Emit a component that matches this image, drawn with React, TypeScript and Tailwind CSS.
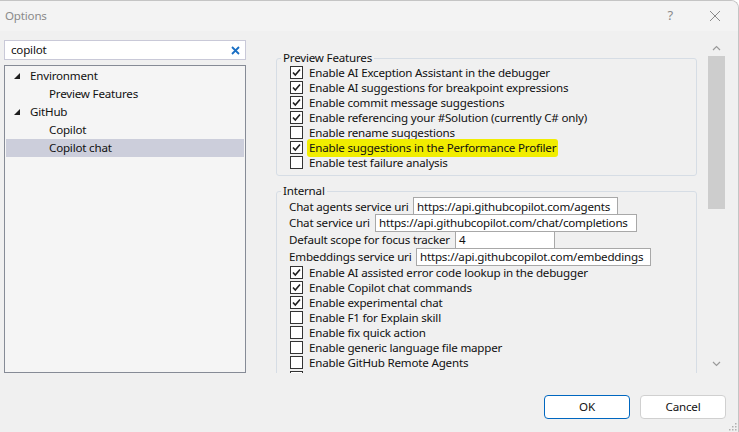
import { Fragment } from 'react'

const preview = [
  { label: 'Enable AI Exception Assistant in the debugger', checked: true },
  { label: 'Enable AI suggestions for breakpoint expressions', checked: true },
  { label: 'Enable commit message suggestions', checked: true },
  { label: 'Enable referencing your #Solution (currently C# only)', checked: true },
  { label: 'Enable rename suggestions', checked: false },
  { label: 'Enable suggestions in the Performance Profiler', checked: true, marked: true },
  { label: 'Enable test failure analysis', checked: false },
]

const uris = [
  { label: 'Chat agents service uri', value: 'https://api.githubcopilot.com/agents', lw: 'w-[124px]', bw: 'w-[205px]' },
  { label: 'Chat service uri', value: 'https://api.githubcopilot.com/chat/completions', lw: 'w-[86px]', bw: 'w-[262px]' },
  { label: 'Default scope for focus tracker', value: '4', lw: 'w-[166px]', bw: 'w-[100px]' },
  { label: 'Embeddings service uri', value: 'https://api.githubcopilot.com/embeddings', lw: 'w-[127px]', bw: 'w-[235px]' },
]

const internal = [
  { label: 'Enable AI assisted error code lookup in the debugger', checked: true },
  { label: 'Enable Copilot chat commands', checked: true },
  { label: 'Enable experimental chat', checked: true },
  { label: 'Enable F1 for Explain skill', checked: false },
  { label: 'Enable fix quick action', checked: false },
  { label: 'Enable generic language file mapper', checked: false },
  { label: 'Enable GitHub Remote Agents', checked: false },
]

const tree = [
  { label: 'Environment', depth: 0, open: true },
  { label: 'Preview Features', depth: 1 },
  { label: 'GitHub', depth: 0, open: true },
  { label: 'Copilot', depth: 1 },
  { label: 'Copilot chat', depth: 1, selected: true },
]

function Box({ checked }: { checked: boolean }) {
  return (
    <span className="w-[13px] h-[13px] shrink-0 border border-[#333333] bg-white flex items-center justify-center">
      {checked && (
        <svg width="11" height="11" viewBox="0 0 11 11">
          <path d="M2 5.5 L4.3 8 L9 2.5" fill="none" stroke="#1e1e1e" strokeWidth="1.6" />
        </svg>
      )}
    </span>
  )
}

function CheckRow({ label, checked, marked }: { label: string; checked: boolean; marked?: boolean }) {
  return (
    <div className="h-[15px] flex items-center gap-[6px] whitespace-nowrap">
      <Box checked={checked} />
      <span className={marked ? 'bg-[#f1ed00] rounded-[3px] px-[2px] -mx-[2px] py-[1.5px] leading-[15px]' : 'leading-[15px]'}>
        {label}
      </span>
    </div>
  )
}

export default function App() {
  return (
    <div
      className="w-[739px] h-[432px] bg-[#f0f0f0] flex flex-col overflow-hidden border-t border-r border-[#c4c4c4] rounded-tr-[8px] text-[11.6px] tracking-[-0.2px] text-[#111]"
      style={{ fontFamily: '"Noto Sans", "Open Sans", sans-serif' }}
    >
      <div className="h-[30px] shrink-0 bg-[#f3f3f3] flex items-center pl-[5px]">
        <span className="text-[#8a8a8a]">Options</span>
        <span className="ml-auto text-[#8a8a8a] text-[13px] mr-[36px]">?</span>
        <svg width="12" height="12" viewBox="0 0 12 12" className="mr-[17px]">
          <path d="M1 1 L11 11 M11 1 L1 11" stroke="#8a8a8a" strokeWidth="1" />
        </svg>
      </div>

      <div className="flex pt-[9px] h-[344px] shrink-0">
        <div className="ml-[4px] w-[242px] flex flex-col gap-[5px]">
          <div className="h-[20px] bg-white border border-[#c9c9d8] flex items-center pl-[6px] pr-[5px]">
            <span>copilot</span>
            <svg width="9" height="9" viewBox="0 0 9 9" className="ml-auto">
              <path d="M1 1 L8 8 M8 1 L1 8" stroke="#1a6fc4" strokeWidth="1.8" />
            </svg>
          </div>
          <div className="h-[308px] border border-[#868b96] bg-[#f5f5f5] p-[1px]">
            {tree.map((t) => (
              <div
                key={t.label}
                className={`h-[18px] flex items-center ${t.selected ? 'bg-[#cccedb]' : ''}`}
              >
                {t.depth === 0 ? (
                  <Fragment>
                    <svg width="6" height="6" viewBox="0 0 6 6" className="ml-[8px] mr-[10px]">
                      <polygon points="6,0 6,6 0,6" fill="#1e1e1e" />
                    </svg>
                    <span>{t.label}</span>
                  </Fragment>
                ) : (
                  <span className="pl-[43px]">{t.label}</span>
                )}
              </div>
            ))}
          </div>
        </div>

        <div className="ml-[30px] w-[421px] h-[333px] overflow-hidden pt-[11px]">
          <fieldset className="border border-[#d6dde5] rounded-[3px] pl-[13px] pb-[5px]">
            <legend className="-ml-[9px] px-[2px] leading-[14px]">Preview Features</legend>
            {preview.map((p) => (
              <CheckRow key={p.label} {...p} />
            ))}
          </fieldset>

          <fieldset className="mt-[8px] border border-[#d6dde5] rounded-[3px] pl-[12px] pb-[5px]">
            <legend className="-ml-[8px] px-[2px] leading-[14px]">Internal</legend>
            {uris.map((u) => (
              <div key={u.label} className="h-[16.75px] flex items-center whitespace-nowrap">
                <span className={`${u.lw} shrink-0`}>{u.label}</span>
                <span className={`${u.bw} h-[18px] border border-[#a8a8a8] bg-white flex items-center pl-[3px]`}>
                  {u.value}
                </span>
              </div>
            ))}
            <div className="pl-[1px]">
              {internal.map((p) => (
                <CheckRow key={p.label} {...p} />
              ))}
              <div className="h-[15px] flex items-center">
                <Box checked={false} />
              </div>
            </div>
          </fieldset>
        </div>

        <div className="ml-[11px] w-[17px] h-[334px] flex flex-col items-center">
          <svg width="9" height="6" viewBox="0 0 9 6" className="mt-[5px]">
            <path d="M1 5 L4.5 1.5 L8 5" fill="none" stroke="#9a9a9a" strokeWidth="1.2" />
          </svg>
          <div className="mt-[5px] w-full h-[153px] bg-[#cdcdcd]" />
          <svg width="9" height="6" viewBox="0 0 9 6" className="mt-auto mb-[7px]">
            <path d="M1 1 L4.5 4.5 L8 1" fill="none" stroke="#9a9a9a" strokeWidth="1.2" />
          </svg>
        </div>
      </div>

      <div className="flex justify-end gap-[10px] pr-[12px] pt-[20px]">
        <button className="w-[86px] h-[24px] rounded-[4px] border border-[#0067c0] bg-white">OK</button>
        <button className="w-[86px] h-[24px] rounded-[4px] border border-[#d0d0d0] bg-white">Cancel</button>
      </div>
      <div className="mt-auto self-end mr-[1px] mb-[1px]">
        <svg width="9" height="9" viewBox="0 0 9 9">
          <rect x="7" y="1" width="1.5" height="1.5" fill="#b0b0b0" />
          <rect x="4" y="4" width="1.5" height="1.5" fill="#b0b0b0" />
          <rect x="7" y="4" width="1.5" height="1.5" fill="#b0b0b0" />
          <rect x="1" y="7" width="1.5" height="1.5" fill="#b0b0b0" />
          <rect x="4" y="7" width="1.5" height="1.5" fill="#b0b0b0" />
          <rect x="7" y="7" width="1.5" height="1.5" fill="#b0b0b0" />
        </svg>
      </div>
    </div>
  )
}
